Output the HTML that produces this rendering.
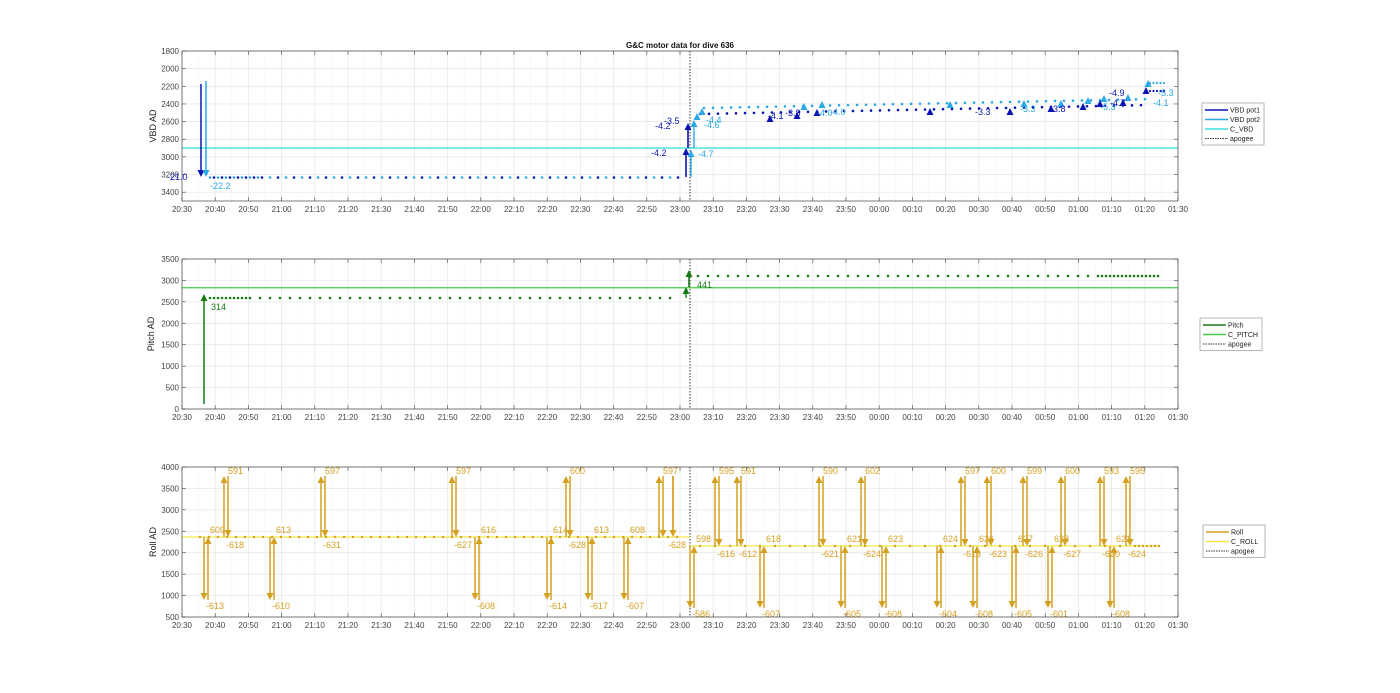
<!DOCTYPE html>
<html><head><meta charset="utf-8"><style>
html,body{margin:0;padding:0;background:#fff;width:1400px;height:693px;overflow:hidden}
svg{display:block;font-family:"Liberation Sans",Arial,sans-serif}
</style></head><body>
<svg id="s" width="1400" height="693" viewBox="0 0 1400 693">
<text x="680" y="48" font-size="8" font-weight="bold" text-anchor="middle" fill="#111">G&amp;C motor data for dive 636</text>
<text transform="translate(156,126) rotate(-90)" font-size="9" text-anchor="middle" fill="#222">VBD AD</text>
<text transform="translate(154,334) rotate(-90)" font-size="9" text-anchor="middle" fill="#222">Pitch AD</text>
<text transform="translate(156,542) rotate(-90)" font-size="9" text-anchor="middle" fill="#222">Roll AD</text>
</svg>
<script>
var S=document.getElementById('s'),NS='http://www.w3.org/2000/svg';
function el(t,a,txt){var e=document.createElementNS(NS,t);for(var k in a)e.setAttribute(k,a[k]);if(txt!=null)e.textContent=txt;S.appendChild(e);return e;}
var X0=182,X1=1178,PX=(X1-X0)/300;
function tx(m){return X0+m*PX;}
var times=["20:30","20:40","20:50","21:00","21:10","21:20","21:30","21:40","21:50","22:00","22:10","22:20","22:30","22:40","22:50","23:00","23:10","23:20","23:30","23:40","23:50","00:00","00:10","00:20","00:30","00:40","00:50","01:00","01:10","01:20","01:30"];
var axes=[{y0:51,y1:201,ymin:1800,ymax:3500,rev:true,ticks:["1800","2000","2200","2400","2600","2800","3000","3200","3400"],tv:[1800,2000,2200,2400,2600,2800,3000,3200,3400]},
{y0:259,y1:409,ymin:0,ymax:3500,rev:false,ticks:["0","500","1000","1500","2000","2500","3000","3500"],tv:[0,500,1000,1500,2000,2500,3000,3500]},
{y0:467,y1:617,ymin:500,ymax:4000,rev:false,ticks:["500","1000","1500","2000","2500","3000","3500","4000"],tv:[500,1000,1500,2000,2500,3000,3500,4000]}];
function yf(a,v){var f=(v-a.ymin)/(a.ymax-a.ymin);return a.rev?a.y0+f*(a.y1-a.y0):a.y1-f*(a.y1-a.y0);}
axes.forEach(function(a){
 el('rect',{x:X0,y:a.y0,width:X1-X0,height:a.y1-a.y0,fill:'#fff'});
 for(var i=0;i<=60;i++){var x=tx(i*5);el('line',{x1:x,x2:x,y1:a.y0,y2:a.y1,stroke:i%2?'#f6f6f6':'#e4e4e4','stroke-width':0.7});}
 a.tv.forEach(function(v,i){var y=yf(a,v);el('line',{x1:X0,x2:X1,y1:y,y2:y,stroke:'#e4e4e4','stroke-width':0.7});
  el('text',{x:X0-3,y:y+3,'font-size':8,'text-anchor':'end',fill:'#444'},a.ticks[i]);
  el('line',{x1:X0,x2:X0+4,y1:y,y2:y,stroke:'#444','stroke-width':0.6});el('line',{x1:X1,x2:X1-4,y1:y,y2:y,stroke:'#444','stroke-width':0.6});});
 times.forEach(function(t,i){var x=tx(i*10);el('line',{x1:x,x2:x,y1:a.y1,y2:a.y1-4,stroke:'#444','stroke-width':0.6});el('line',{x1:x,x2:x,y1:a.y0,y2:a.y0+4,stroke:'#444','stroke-width':0.6});
  el('text',{x:x,y:a.y1+11,'font-size':8,'text-anchor':'middle',fill:'#444'},t);});
 el('line',{x1:690,x2:690,y1:a.y0,y2:a.y1,stroke:'#333','stroke-width':1,'stroke-dasharray':'1.5,1.5'});
});
function dot(x,y,c,r){el('circle',{cx:x,cy:y,r:r||1.4,fill:c});}
function arr(x,ya,yb,c,w){el('line',{x1:x,x2:x,y1:ya,y2:yb+(yb<ya?4:-4),stroke:c,'stroke-width':w||1.5});var d=yb<ya?1:-1;el('path',{d:'M'+(x-3.5)+' '+(yb+7*d)+'L'+x+' '+yb+'L'+(x+3.5)+' '+(yb+7*d)+'Z',fill:c});}
function lab(x,y,t,c,s){el('text',{x:x,y:y,'font-size':s||9,fill:c},t);}
function tri(x,y,c){el('path',{d:'M'+(x-3.5)+' '+(y+3)+'L'+x+' '+(y-4)+'L'+(x+3.5)+' '+(y+3)+'Z',fill:c});}
// ---- VBD
var A=axes[0],DB='#0a14b4',LB='#2aa8e6',CY='#3ee0e0';
el('line',{x1:X0,x2:X1,y1:yf(A,2900),y2:yf(A,2900),stroke:CY,'stroke-width':1.3});
arr(201,84,177,DB,1.5);arr(206,81,177,LB,1.5);
var k=0;for(var x=210;x<680;x+=(x<260?4:8)){dot(x,177.5,(k++%2)?DB:LB,1.3);}
for(var x=700;x<1150;x+=9){var y=111-(x-700)*0.02;dot(x,y+3,DB,1.3);if(x%3<2)dot(x+4,y-3,LB,1.3);}
for(var x=1150;x<1165;x+=3.5){dot(x,91,DB,1.1);dot(x,83,LB,1.1);}
arr(686,177,148,DB,1.6);arr(688,148,123,DB,1.6);arr(691,177,150,LB,1.4);arr(694,148,120,LB,1.4);
[[697,117,LB],[702,112,LB],[770,119,DB],[797,116,DB],[804,107,LB],[817,113,DB],[822,105,LB],[930,112,DB],[950,105,LB],[1010,112,DB],[1024,104,LB],[1051,109,DB],[1061,104,LB],[1083,107,DB],[1088,101,LB],[1100,104,DB],[1104,99,LB],[1123,103,DB],[1128,98,LB],[1146,91,DB],[1148,84,LB]].forEach(function(p){tri(p[0],p[1],p[2]);});
[[167,180,"-21.0",DB],[210,189,"-22.2",LB],[651,156,"-4.2",DB],[655,129,"-4.2",DB],[664,124,"-3.5",DB],[698,157,"-4.7",LB],[704,128,"-4.6",LB],[706,123,"-4.4",LB],[768,119,"-4.1",DB],[785,116,"-3.8",DB],[817,116,"-4.0",LB],[830,115,"-4.0",LB],[975,115,"-3.3",DB],[1020,112,"-3.3",LB],[1050,112,"-3.8",DB],[1100,110,"-5.3",LB],[1109,96,"-4.9",DB],[1110,106,"-4.7",DB],[1158,96,"-5.3",LB],[1153,106,"-4.1",LB]].forEach(function(p){lab(p[0],p[1],p[2],p[3]);});
// ---- Pitch
A=axes[1];var DG='#167a16',LG='#44cc44';
el('line',{x1:X0,x2:X1,y1:yf(A,2830),y2:yf(A,2830),stroke:LG,'stroke-width':1.3});
arr(204,404,294,DG,1.5);
for(var x=210;x<680;x+=(x<250?4:10))dot(x,298,DG,1.3);
arr(686,298,287,DG,1.4);arr(689,287,270,DG,1.6);
for(var x=698;x<1162;x+=(x>1090?4:10))dot(x,276,DG,1.3);
lab(211,310,"314",DG);lab(697,288,"441",DG);
// ---- Roll
A=axes[2];var RO='#d4a020',YL='#f2e64a';
el('line',{x1:X0,x2:690,y1:537,y2:537,stroke:YL,'stroke-width':1.3});
el('line',{x1:690,x2:1160,y1:546,y2:546,stroke:YL,'stroke-width':1.3});
for(var x=200;x<680;x+=9)dot(x,537,RO,1.2);for(var x=700;x<1162;x+=(x>1130?4:15))dot(x,546,RO,1.2);
var ev=[[204,0,"-613","609"],[224,1,"591","-618"],[270,0,"-610","613"],[321,1,"597","-631"],[452,1,"597","-627"],[475,0,"-608","616"],[547,0,"-614","614"],[566,1,"600","-628"],[588,0,"-617","613"],[624,0,"-607","608"],[659,1,"597",""],[673,2,"","-628"],
[690,0,"-586","598"],[715,1,"595","-616"],[737,1,"591","-612"],[760,0,"-607","618"],[819,1,"590","-621"],[841,0,"-605","621"],[861,1,"602","-624"],[882,0,"-608","623"],[937,0,"-604","624"],[961,1,"597","-613"],[973,0,"-608","626"],[987,1,"600","-623"],[1012,0,"-605","627"],[1023,1,"599","-626"],[1048,0,"-601","628"],[1061,1,"600","-627"],[1100,1,"593","-620"],[1110,0,"-608","621"],[1126,1,"595","-624"]];
ev.forEach(function(e){var x=e[0],b=x<690?537:546,top=476,bot=x<690?600:608;
 if(e[1]==0){arr(x,b,bot,RO,1.5);arr(x+4,bot,b,RO,1.5);lab(x+2,bot+9,e[2],RO);lab(x+6,b-4,e[3],RO);}
 else if(e[1]==1){arr(x,b,top,RO,1.5);arr(x+4,top,b,RO,1.5);lab(x+4,top-2,e[2],RO);lab(x+2,b+11,e[3],RO);}
 else{el('line',{x1:x,x2:x,y1:476,y2:b-4,stroke:RO,'stroke-width':1.5});arr(x,476,b,RO,1.5);lab(x-5,b+11,e[3],RO);}
});
function legend(x,y,w,items){el('rect',{x:x,y:y,width:w,height:items.length*9.5+4,fill:'#fff',stroke:'#888','stroke-width':0.6});
 items.forEach(function(it,i){var yy=y+7+i*9.5;el('line',{x1:x+3,x2:x+26,y1:yy,y2:yy,stroke:it[1],'stroke-width':it[2]?1:1.4,'stroke-dasharray':it[2]?'1.5,1':'none'});el('text',{x:x+28,y:yy+2.5,'font-size':7,fill:'#222'},it[0]);});}
legend(1202,103,62,[["VBD pot1",DB],["VBD pot2",LB],["C_VBD",CY],["apogee","#333",1]]);
legend(1200,318,62,[["Pitch",DG],["C_PITCH",LG],["apogee","#333",1]]);
legend(1203,525,62,[["Roll",RO],["C_ROLL",YL],["apogee","#333",1]]);
axes.forEach(function(a){el('rect',{x:X0,y:a.y0,width:X1-X0,height:a.y1-a.y0,fill:'none',stroke:'#444','stroke-width':0.7});});
</script>
</body></html>
